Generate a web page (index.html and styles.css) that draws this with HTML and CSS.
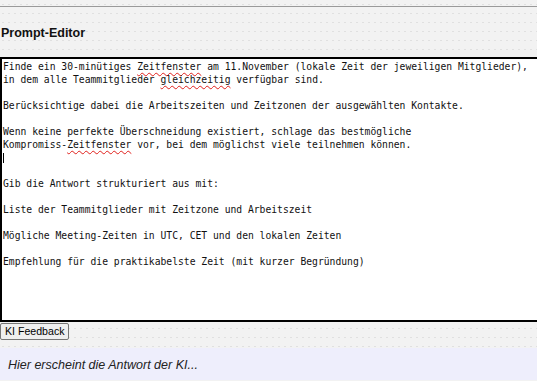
FILE: index.html
```html
<!DOCTYPE html>
<html lang="de">
<head>
  <meta charset="UTF-8">
  <title>Prompt-Editor</title>
  <link rel="stylesheet" href="styles.css">
</head>
<body>

  <div class="top-rule"></div>

  <h3 class="editor-title">Prompt-Editor</h3>

  <div class="prompt-box" id="promptInput" contenteditable="true" spellcheck="true">Finde ein 30-minütiges <span class="typo">Zeitfenster</span> am 11.November (lokale Zeit der jeweiligen Mitglieder),
in dem alle Teammitglieder <span class="typo">gleichzeitig</span> verfügbar sind.

Berücksichtige dabei die Arbeitszeiten und Zeitzonen der ausgewählten Kontakte.

Wenn keine perfekte Überschneidung existiert, schlage das bestmögliche
Kompromiss-<span class="typo">Zeitfenster</span> vor, bei dem möglichst viele teilnehmen können.
<span class="caret"></span>

Gib die Antwort strukturiert aus mit:

Liste der Teammitglieder mit Zeitzone und Arbeitszeit

Mögliche Meeting-Zeiten in UTC, CET und den lokalen Zeiten

Empfehlung für die praktikabelste Zeit (mit kurzer Begründung)
</div>

  <button class="feedback-btn" type="button">KI Feedback</button>

  <div class="answer-box" id="answer">
    <em>Hier erscheint die Antwort der KI...</em>
  </div>

</body>
</html>
```

FILE: styles.css
```css
body {
  font-family: 'Liberation Sans', Arial, sans-serif;
  background-color: #f2f2f2;
  background-image: radial-gradient(circle, #e0e0e0 0.5px, transparent 0.8px);
  background-size: 6px 9px;
  margin: 0;
  padding: 0;
  overflow: hidden;
}
.top-rule {
  height: 6px;
  border-bottom: 1px solid #9a9a9a;
}
.editor-title {
  font-size: 12.5px;
  font-weight: bold;
  line-height: 15px;
  color: #111;
  margin: 19px 0 16px 1px;
}
.prompt-box {
  box-sizing: border-box;
  width: calc(100% + 20px);
  height: 265px;
  background-color: white;
  border: 2px solid black;
  padding: 1px 1px 2px;
  font-family: 'DejaVu Sans Mono', monospace;
  font-size: 9.7px;
  line-height: 13px;
  color: #111;
  white-space: pre;
  overflow: hidden;
  outline: none;
}
.typo {
  text-decoration: underline wavy #e0201c;
  text-decoration-thickness: 1px;
  text-underline-offset: 2px;
}
.caret {
  display: inline-block;
  width: 1px;
  height: 10px;
  background-color: black;
  vertical-align: -2px;
}
.feedback-btn {
  display: block;
  margin-top: 1px;
  padding: 1px 4px;
  font-family: 'Liberation Sans', Arial, sans-serif;
  font-size: 10.6px;
  line-height: 13px;
  color: black;
  background-color: #efefef;
  border: 1px solid #767676;
  border-radius: 2px;
}
.answer-box {
  margin-top: 8px;
  padding: 10px 8px 7px;
  background-color: #eeeefc;
  font-size: 12.5px;
  line-height: 15px;
  color: #222;
}
```
